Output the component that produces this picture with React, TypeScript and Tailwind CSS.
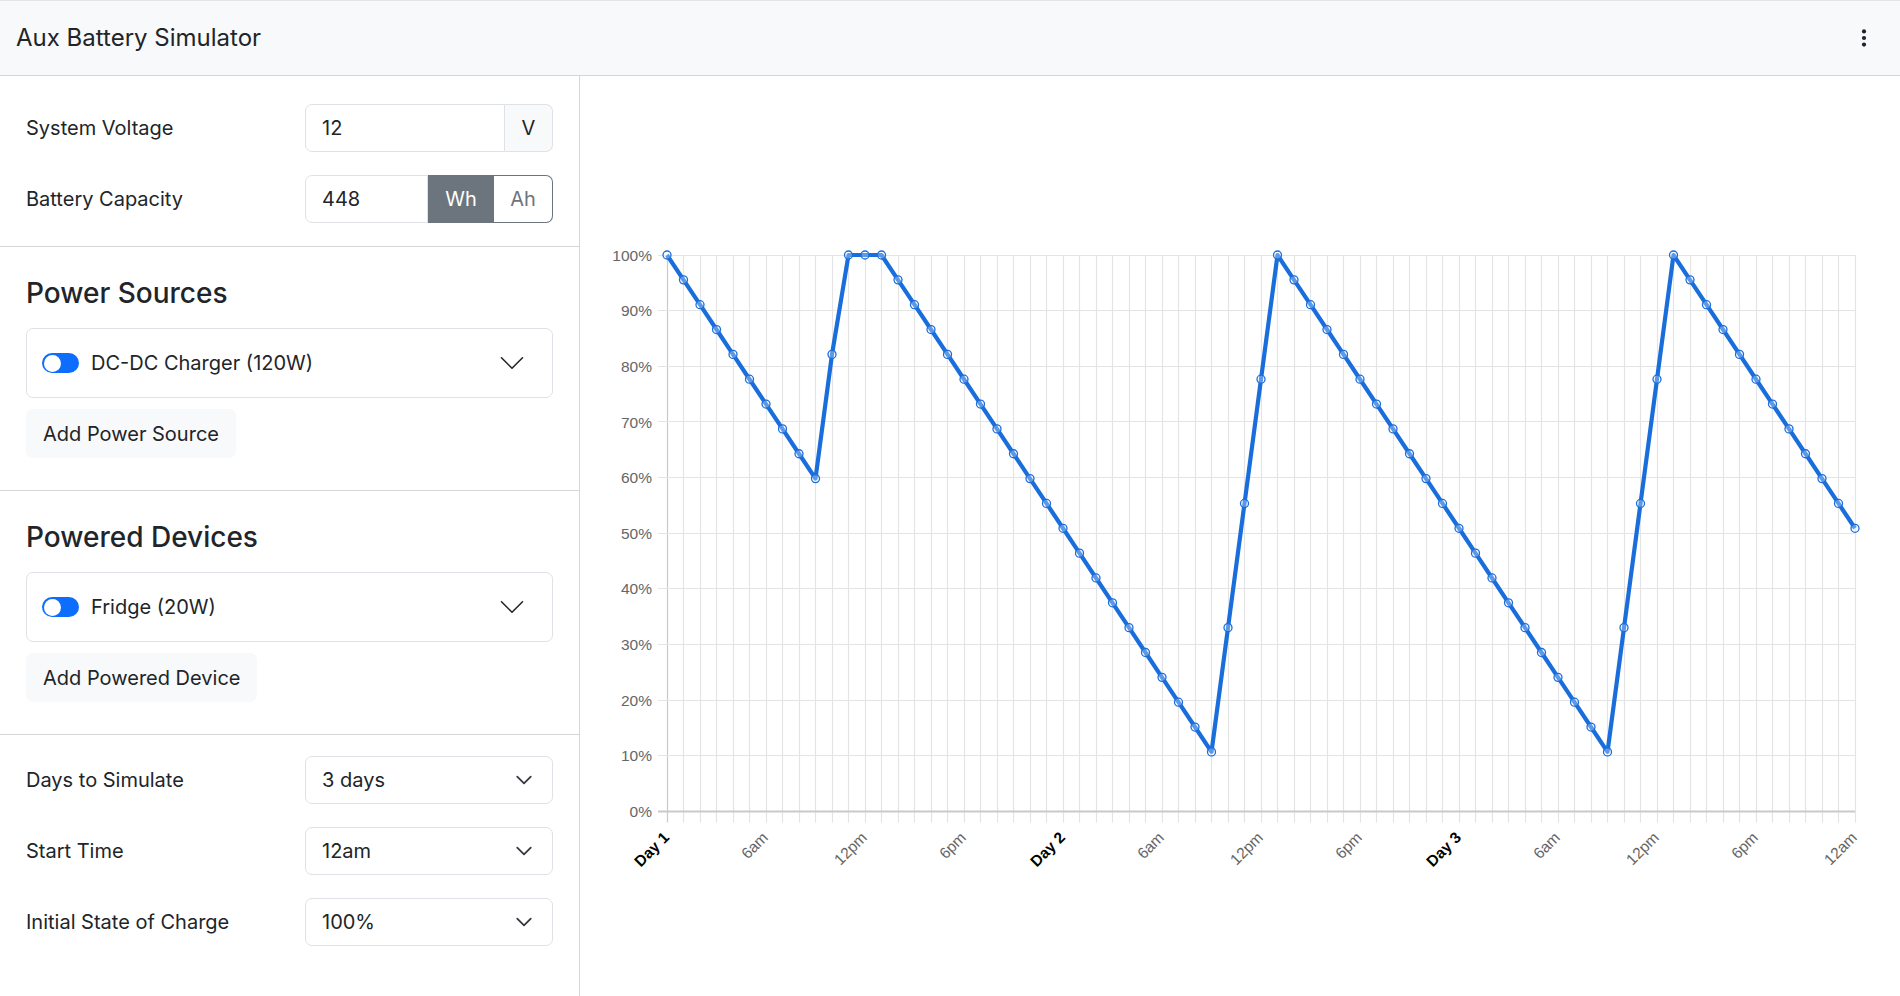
import React from "react";

const CAPACITY_WH = 448;
const LOAD_W = 20;
const CHARGER_W = 120;

// state of charge for every hour of the 3 day run
function simulate(): number[] {
  const out: number[] = [];
  let soc = 100;
  for (let h = 0; h <= 72; h++) {
    out.push(soc);
    const hod = h % 24;
    const charging = hod >= 9 && hod < 13;
    const net = (charging ? CHARGER_W : 0) - LOAD_W;
    soc = Math.min(100, Math.max(0, soc + (net / CAPACITY_WH) * 100));
  }
  return out;
}

function SelectChevron() {
  return (
    <svg
      viewBox="0 0 16 16"
      className="h-[18px] w-[18px] text-[#343a40]"
      fill="none"
      stroke="currentColor"
      strokeWidth={1.6}
      strokeLinecap="round"
      strokeLinejoin="round"
    >
      <path d="M2 5l6 6 6-6" />
    </svg>
  );
}

function AccordionChevron() {
  return (
    <svg
      viewBox="0 0 16 16"
      className="h-[28px] w-[28px] text-[#212529]"
      fill="none"
      stroke="currentColor"
      strokeWidth={0.9}
      strokeLinecap="round"
      strokeLinejoin="round"
    >
      <path d="M2 5l6 6 6-6" />
    </svg>
  );
}

function Toggle() {
  return (
    <span className="relative inline-block h-[20px] w-[37px] shrink-0 rounded-full bg-[#0d6efd]">
      <span className="absolute left-[1.5px] top-[1.5px] h-[17px] w-[17px] rounded-full bg-white" />
    </span>
  );
}

function Row({ label, children }: { label: string; children: React.ReactNode }) {
  return (
    <div className="flex h-[48px] items-center justify-between">
      <span className="text-[20px] text-[#212529]">{label}</span>
      {children}
    </div>
  );
}

function SelectBox({ value }: { value: string }) {
  return (
    <div className="flex h-[48px] w-[248px] items-center justify-between rounded-[7px] border border-[#dee2e6] pl-[16px] pr-[19px] text-[20px] text-[#212529]">
      <span>{value}</span>
      <SelectChevron />
    </div>
  );
}

function ItemCard({ name }: { name: string }) {
  return (
    <div className="flex h-[70px] items-center justify-between rounded-[7px] border border-[#dee2e6] pl-[15px] pr-[26px]">
      <div className="flex items-center gap-[12px]">
        <Toggle />
        <span className="text-[20px] text-[#212529]">{name}</span>
      </div>
      <AccordionChevron />
    </div>
  );
}

function ListSection({ title, item, button }: { title: string; item: string; button: string }) {
  return (
    <div className="border-b border-[#d6d6d6] px-[26px] pb-[32px] pt-[29px]">
      <h2 className="mb-[18px] text-[28px] leading-[34px] font-medium text-[#212529]">{title}</h2>
      <ItemCard name={item} />
      <button className="mt-[11px] flex h-[49px] items-center rounded-[7px] bg-[#f8f9fa] px-[17px] text-[20px] text-[#212529]">
        {button}
      </button>
    </div>
  );
}

function Sidebar() {
  return (
    <aside className="flex w-[580px] shrink-0 flex-col border-r border-[#d6d6d6]">
      {/* battery */}
      <div className="flex flex-col gap-[23px] border-b border-[#d6d6d6] px-[26px] pb-[23px] pt-[28px]">
        <Row label="System Voltage">
          <div className="flex h-[48px] w-[248px] text-[20px] text-[#212529]">
            <div className="flex flex-1 items-center rounded-l-[7px] border border-[#dee2e6] pl-[16px]">12</div>
            <div className="flex w-[48px] items-center justify-center rounded-r-[7px] border border-l-0 border-[#dee2e6] bg-[#f8f9fa]">
              V
            </div>
          </div>
        </Row>
        <Row label="Battery Capacity">
          <div className="flex h-[48px] w-[248px] text-[20px]">
            <div className="flex w-[123px] items-center rounded-l-[7px] border border-[#dee2e6] pl-[16px] text-[#212529]">448</div>
            <div className="flex w-[66px] items-center justify-center border border-[#6c757d] bg-[#6c757d] text-white">Wh</div>
            <div className="flex flex-1 items-center justify-center rounded-r-[7px] border border-l-0 border-[#6c757d] bg-white text-[#6c757d]">
              Ah
            </div>
          </div>
        </Row>
      </div>

      <ListSection title="Power Sources" item="DC-DC Charger (120W)" button="Add Power Source" />
      <ListSection title="Powered Devices" item="Fridge (20W)" button="Add Powered Device" />

      {/* simulation settings */}
      <div className="flex flex-col gap-[23px] px-[26px] pt-[21px]">
        <Row label="Days to Simulate">
          <SelectBox value="3 days" />
        </Row>
        <Row label="Start Time">
          <SelectBox value="12am" />
        </Row>
        <Row label="Initial State of Charge">
          <SelectBox value="100%" />
        </Row>
      </div>
    </aside>
  );
}

function SocChart() {
  const W = 1320;
  const H = 920;
  const x0 = 87;
  const x1 = 1275;
  const yTop = 179;
  const yBot = 735.5;
  const hours = 72;
  const dx = (x1 - x0) / hours;
  const xs = (h: number) => x0 + h * dx;
  const ys = (v: number) => yBot - (v / 100) * (yBot - yTop);
  const crisp = (n: number) => Math.round(n - 0.5) + 0.5;

  const data = simulate();
  const xLabels = ["Day 1", "6am", "12pm", "6pm", "Day 2", "6am", "12pm", "6pm", "Day 3", "6am", "12pm", "6pm", "12am"];
  const pts = data.map((v, i) => `${xs(i).toFixed(2)},${ys(v).toFixed(2)}`).join(" ");

  return (
    <svg width={W} height={H} viewBox={`0 0 ${W} ${H}`} className="block">
      {/* vertical grid, one per hour */}
      {Array.from({ length: hours + 1 }, (_, i) => (
        <line
          key={`v${i}`}
          x1={crisp(xs(i))}
          x2={crisp(xs(i))}
          y1={yTop}
          y2={yBot + 11}
          stroke={i === 0 ? "#c9c9c9" : "#e4e4e4"}
          strokeWidth={1.2}
        />
      ))}
      {/* horizontal grid */}
      {Array.from({ length: 11 }, (_, i) => {
        const v = i * 10;
        const y = crisp(ys(v));
        return (
          <g key={`h${i}`}>
            <line x1={x0 - 9} x2={x1} y1={y} y2={y} stroke={v === 0 ? "#c9c9c9" : "#e4e4e4"} strokeWidth={v === 0 ? 2 : 1.2} />
            <text
              x={x0 - 15}
              y={ys(v)}
              dy="0.36em"
              textAnchor="end"
              fontSize={15.5}
              fill="#666"
              fontFamily="'Liberation Sans', Arial, sans-serif"
            >
              {v}%
            </text>
          </g>
        );
      })}
      {/* x labels every 6 hours */}
      {xLabels.map((label, i) => {
        const day = label.startsWith("Day");
        return (
          <text
            key={`x${i}`}
            transform={`translate(${xs(i * 6) + 3}, ${yBot + 27}) rotate(-45)`}
            textAnchor="end"
            fontSize={15.5}
            fontWeight={day ? 700 : 400}
            fill={day ? "#000" : "#666"}
            fontFamily="'Liberation Sans', Arial, sans-serif"
          >
            {label}
          </text>
        );
      })}
      <polyline points={pts} fill="none" stroke="#1a6edc" strokeWidth={4.2} strokeLinejoin="round" />
      {data.map((v, i) => (
        <circle key={`p${i}`} cx={xs(i)} cy={ys(v)} r={4} fill="rgba(255,255,255,0.3)" stroke="#1a6edc" strokeWidth={1.3} />
      ))}
    </svg>
  );
}

export default function App() {
  return (
    <div className="flex h-[996px] w-full flex-col overflow-hidden bg-white font-[Inter,sans-serif]">
      {/* top bar */}
      <header className="flex h-[76px] shrink-0 items-center justify-between border-b border-t border-[#d6d6d6] border-t-[#e4e4e4] bg-[#f8f9fa] pl-[16px] pr-[26px]">
        <h1 className="text-[24px] text-[#212529]">Aux Battery Simulator</h1>
        <svg viewBox="0 0 20 20" className="h-[20px] w-[20px]" fill="#212529">
          <circle cx="10" cy="3.4" r="2.1" />
          <circle cx="10" cy="10" r="2.1" />
          <circle cx="10" cy="16.6" r="2.1" />
        </svg>
      </header>
      <div className="flex flex-1">
        <Sidebar />
        <main className="flex-1">
          <SocChart />
        </main>
      </div>
    </div>
  );
}
